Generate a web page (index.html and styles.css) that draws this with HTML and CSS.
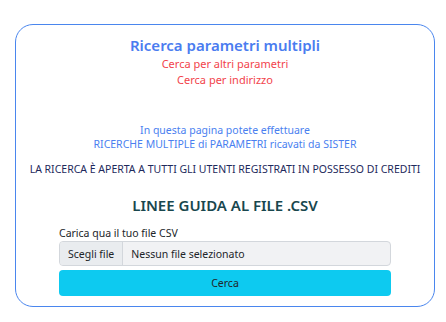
FILE: index.html
```html
<!DOCTYPE html>
<html lang="it">
<head>
    <meta charset="UTF-8">
    <meta name="viewport" content="width=device-width, initial-scale=1.0">
    <title>Ricerca parametri multipli</title>
    <link rel="stylesheet" href="styles.css">
</head>
<body>
    <div class="search-card">
        <div class="search-header">
            <h1>Ricerca parametri multipli</h1>
            <a href="#" class="alt-link">Cerca per altri parametri</a>
            <a href="#" class="alt-link">Cerca per indirizzo</a>
        </div>

        <p class="intro">
            In questa pagina potete effettuare<br>
            RICERCHE MULTIPLE di PARAMETRI ricavati da SISTER
        </p>

        <p class="notice">LA RICERCA È APERTA A TUTTI GLI UTENTI REGISTRATI IN POSSESSO DI CREDITI</p>

        <h2 class="guide">LINEE GUIDA AL FILE .CSV</h2>

        <form class="upload-form">
            <label for="csv-file">Carica qua il tuo file CSV</label>
            <div class="file-group">
                <span class="file-btn">Scegli file</span>
                <span class="file-name">Nessun file selezionato</span>
            </div>
            <button type="submit" class="btn">Cerca</button>
        </form>
    </div>
</body>
</html>
```

FILE: styles.css
```css
body {
    font-family: 'Noto Sans', 'Open Sans', sans-serif;
    margin: 0;
    padding: 24px 11px 0 15px;
    background-color: white;
}
.search-card {
    border: 1px solid #4a86ee;
    border-radius: 18px;
    padding: 11px 0 10px;
    text-align: center;
}
.search-header h1 {
    font-size: 15px;
    font-weight: 600;
    line-height: 18px;
    color: #4a7cf0;
    margin: 0 0 2px;
}
.alt-link {
    display: block;
    font-size: 11px;
    line-height: 15px;
    color: #f2434b;
    text-decoration: none;
}
.alt-link + .alt-link {
    margin-top: 1px;
}
.intro {
    font-size: 10.5px;
    line-height: 14px;
    color: #4a7ff0;
    margin: 36px 0 0;
}
.notice {
    font-size: 10.5px;
    line-height: 14px;
    color: #1e2a5c;
    margin: 11px 0 0;
}
.guide {
    font-size: 15px;
    font-weight: 600;
    line-height: 20px;
    color: #19474e;
    margin: 19px 0 0;
}
.upload-form {
    width: 332px;
    margin: 11px auto 0;
    text-align: left;
}
.upload-form label {
    display: block;
    font-size: 10.5px;
    line-height: 14px;
    color: #212529;
    margin-bottom: 1px;
}
.file-group {
    display: flex;
    height: 25px;
    border: 1px solid #d3d7dc;
    border-radius: 4px;
    background-color: #f1f2f4;
    box-sizing: border-box;
    font-size: 10.5px;
    color: #212529;
    overflow: hidden;
}
.file-btn {
    display: flex;
    align-items: center;
    padding: 0 8px;
    background-color: #e9ecef;
    border-right: 1px solid #d3d7dc;
}
.file-name {
    display: flex;
    align-items: center;
    padding: 0 8px;
}
.btn {
    display: block;
    width: 100%;
    height: 26px;
    margin-top: 4px;
    border: none;
    border-radius: 4px;
    background-color: #0dcaf0;
    color: #212529;
    font-family: inherit;
    font-size: 10.5px;
    cursor: pointer;
}
```
